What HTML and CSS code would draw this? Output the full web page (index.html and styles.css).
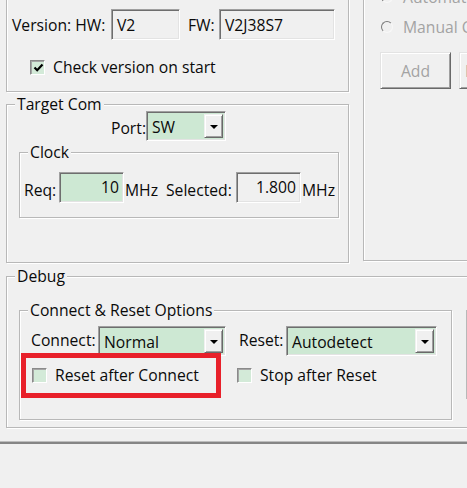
FILE: index.html
```html
<!DOCTYPE html>
<html>
<head>
<meta charset="utf-8">
<link rel="stylesheet" href="styles.css">
</head>
<body>
<div class="upper">
  <div class="left-col">
    <div class="group g-version">
      <div class="row version-row">
        <span class="lbl lbl-ver">Version: HW:</span>
        <div class="tb tb-hw">V2</div>
        <span class="lbl lbl-fw">FW:</span>
        <div class="tb tb-fw">V2J38S7</div>
      </div>
      <div class="check check-version">
        <span class="box"><svg width="11" height="11" viewBox="0 0 11 11"><path d="M1.5 5.5 L4.2 8.2 L9.5 2.5" fill="none" stroke="#000" stroke-width="2.2"/></svg></span>
        <span class="check-text">Check version on start</span>
      </div>
    </div>
    <div class="group g-target">
      <span class="legend">Target Com</span>
      <div class="row port-row">
        <span class="lbl lbl-port">Port:</span>
        <div class="combo combo-port"><span class="val">SW</span><span class="drop"></span></div>
      </div>
      <div class="group g-clock">
        <span class="legend">Clock</span>
        <div class="row clock-row">
          <span class="lbl lbl-req">Req:</span>
          <div class="tb tb-num tb-green">10</div>
          <span class="lbl lbl-mhz">MHz</span>
          <span class="lbl lbl-sel">Selected:</span>
          <div class="tb tb-num">1.800</div>
          <span class="lbl lbl-mhz2">MHz</span>
        </div>
      </div>
    </div>
  </div>
  <div class="group g-right">
    <div class="radio-row"><span class="radio"></span><span class="dis">Automatic Configuration</span></div>
    <div class="radio-row second"><span class="radio"></span><span class="dis">Manual Configuration</span></div>
    <div class="buttons">
      <button class="btn" disabled>Add</button>
      <button class="btn" disabled>Remove</button>
    </div>
  </div>
</div>
<div class="group g-debug">
  <span class="legend">Debug</span>
  <div class="debug-inner">
    <div class="group g-options">
      <span class="legend">Connect &amp; Reset Options</span>
      <div class="row combo-row">
        <span class="lbl lbl-connect">Connect:</span>
        <div class="combo combo-connect"><span class="val">Normal</span><span class="drop"></span></div>
        <span class="lbl lbl-reset">Reset:</span>
        <div class="combo combo-reset"><span class="val">Autodetect</span><span class="drop"></span></div>
      </div>
      <div class="row check-row">
        <div class="check check-rac"><span class="box"></span><span class="check-text">Reset after Connect</span></div>
        <div class="check"><span class="box"></span><span class="check-text">Stop after Reset</span></div>
      </div>
      <div class="highlight"></div>
    </div>
    <div class="group g-side"></div>
  </div>
</div>
<div class="sep"></div>
</body>
</html>
```
FILE: styles.css
```css
* { box-sizing: border-box; }
html, body { margin: 0; padding: 0; }
body {
  width: 467px;
  height: 488px;
  overflow: hidden;
  background: #f0f0f0;
  font-family: "Open Sans", "Noto Sans", sans-serif;
  font-size: 15.7px;
  line-height: 20px;
  color: #0a0a0a;
}

.group {
  position: relative;
  border: 1px solid #b8b8b8;
  box-shadow: inset 1px 1px 0 #fff, 1px 1px 0 #fff;
  flex: none;
}
.legend {
  position: absolute;
  top: -11px;
  left: 8px;
  padding: 0 2px;
  background: #f0f0f0;
  white-space: nowrap;
}

.row { display: flex; align-items: center; }
.lbl { white-space: nowrap; flex: none; }

/* text boxes */
.tb {
  flex: none;
  height: 31px;
  border: 1px solid;
  border-color: #a0a0a0 #fff #fff #a0a0a0;
  box-shadow: inset 1px 1px 0 #6e6e6e, inset -1px -1px 0 #e3e3e3;
  padding: 5px 4px 0 5px;
  white-space: nowrap;
}
.tb-num { text-align: right; width: 65px; padding-top: 4px; }
.tb-green { background: #cde8d3; padding-right: 4px; }

/* combo boxes */
.combo {
  flex: none;
  display: flex;
  align-items: stretch;
  height: 30px;
  border: 1px solid;
  border-color: #a0a0a0 #fff #fff #a0a0a0;
  box-shadow: inset 1px 1px 0 #6e6e6e, inset -1px -1px 0 #e3e3e3;
  background: #cde8d3;
  padding: 2px 2px 2px 5px;
}
.combo .val { flex: 1; padding-top: 3px; white-space: nowrap; }
.drop {
  flex: none;
  width: 19px;
  display: flex;
  align-items: center;
  justify-content: center;
  background: #f0f0f0;
  border: 1px solid;
  border-color: #f0f0f0 #696969 #696969 #f0f0f0;
  box-shadow: inset 1px 1px 0 #fff, inset -1px -1px 0 #a0a0a0;
}
.drop::after {
  content: "";
  width: 0;
  height: 0;
  border-left: 4.5px solid transparent;
  border-right: 4.5px solid transparent;
  border-top: 4.5px solid #000;
  margin-top: 1px;
}

/* checkboxes */
.check { display: flex; align-items: center; height: 20px; }
.box {
  flex: none;
  width: 15px;
  height: 15px;
  border: 1px solid;
  border-color: #8a8a8a #fff #fff #8a8a8a;
  box-shadow: inset 1px 1px 0 #a5a5a5;
  background: #d3ead8;
  display: flex;
  align-items: center;
  justify-content: center;
  padding: 1px 0 0 1px;
}
.check-text { margin-left: 8px; white-space: nowrap; }

/* layout: upper part */
.upper {
  display: flex;
  align-items: flex-start;
  margin-top: -10px;
  padding-left: 6px;
}
.left-col { width: 343px; flex: none; }

.g-version { height: 102px; padding: 18px 0 0 5px; }
.version-row { height: 31px; }
.lbl-ver { width: 99px; }
.tb-hw { width: 69px; }
.lbl-fw { width: 31px; margin-left: 8px; }
.tb-fw { width: 116px; }
.check-version { margin: 17px 0 0 18px; }

.g-target { margin-top: 12px; height: 159px; padding-top: 6px; }
.port-row { height: 30px; margin-left: 104px; }
.lbl-port { width: 35px; padding-top: 4px; }
.combo-port { width: 80px; }

.g-clock { margin: 11px 0 0 12px; width: 320px; height: 66px; padding: 19px 0 0 4px; }
.clock-row { height: 31px; }
.clock-row .lbl { padding-top: 5px; }
.lbl-req { width: 35px; }
.lbl-mhz { width: 42px; padding-left: 1px; }
.lbl-sel { width: 70px; }
.lbl-mhz2 { padding-left: 1px; }

.g-right { margin: -10px 0 0 14px; width: 150px; height: 281px; padding: 6px 0 0 16px; }
.radio-row { display: flex; align-items: center; height: 20px; }
.radio-row.second { margin-top: 10px; }
.radio {
  flex: none;
  width: 12px;
  height: 12px;
  margin-left: 1px;
  margin-right: 10px;
  border-radius: 50%;
  border: 1px solid;
  border-color: #7a7a7a #f8f8f8 #f8f8f8 #7a7a7a;
  background: #f0f0f0;
}
.dis { color: #a3a3a3; white-space: nowrap; }
.buttons { display: flex; gap: 8px; margin-top: 15px; }
.btn {
  flex: none;
  width: 71px;
  height: 37px;
  font: inherit;
  color: #a3a3a3;
  background: #f0f0f0;
  border: 1px solid;
  border-color: #e3e3e3 #696969 #696969 #e3e3e3;
  box-shadow: inset 1px 1px 0 #fff, inset -1px -1px 0 #a0a0a0;
  padding: 0;
}

/* debug */
.g-debug { margin: 13px 0 0 6px; width: 480px; height: 152px; padding: 33px 0 0 12px; }
.debug-inner { display: flex; align-items: flex-start; }
.g-options { width: 433px; height: 110px; padding: 15px 0 0 11px; }
.combo-row { height: 30px; }
.lbl-connect { width: 67px; padding-bottom: 2px; }
.combo-connect { width: 128px; }
.lbl-reset { width: 47px; margin-left: 13px; padding-bottom: 2px; }
.combo-reset { width: 151px; }
.check-row { margin-top: 9px; height: 20px; }
.check-rac { width: 205px; margin-left: 1px; }
.g-side { margin-left: 14px; width: 60px; height: 89px; }

.highlight {
  position: absolute;
  left: 1px;
  top: 42px;
  width: 200px;
  height: 45px;
  border: 5px solid #e8202a;
}

.sep {
  margin-top: 13px;
  width: 467px;
  height: 3px;
  border-top: 1px solid #bdbdbd;
  background: #858585;
}
```
